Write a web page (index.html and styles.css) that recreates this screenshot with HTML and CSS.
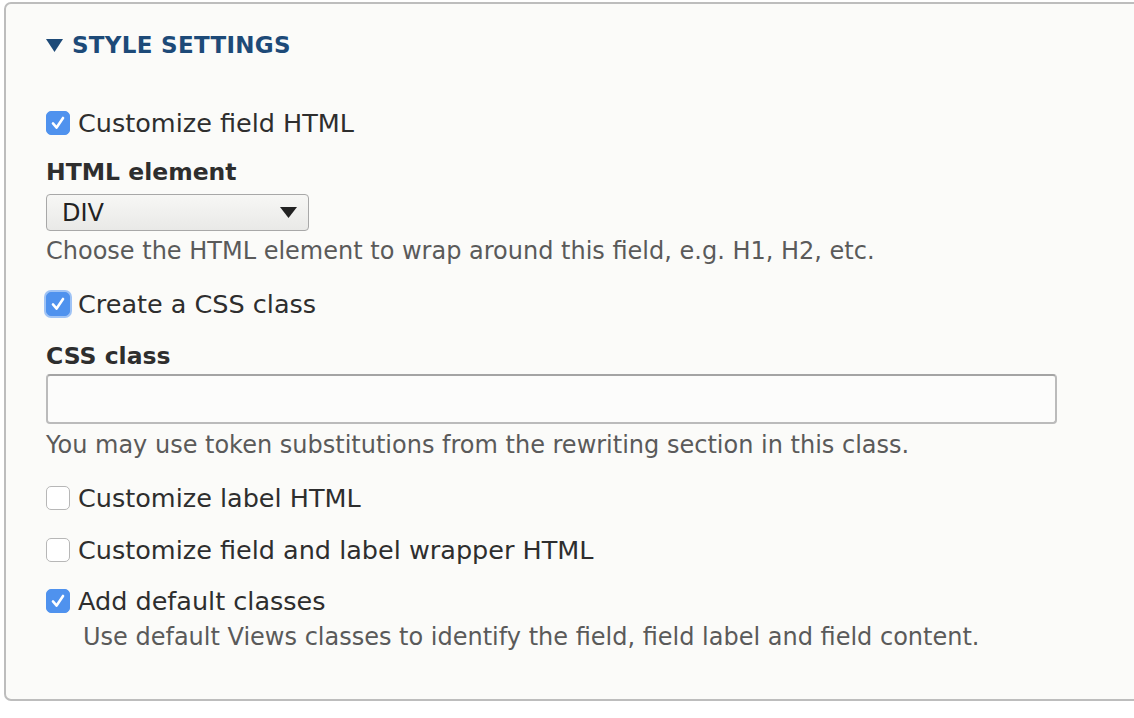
FILE: index.html
```html
<!DOCTYPE html>
<html>
<head>
<meta charset="utf-8">
<link rel="stylesheet" href="styles.css">
</head>
<body>
<div class="panel">
  <div class="legend">
    <svg class="tri" width="17" height="13" viewBox="0 0 17 13"><polygon points="0,0 17,0 8.5,13" fill="#1d4a78"/></svg>
    <span class="legend-text">STYLE SETTINGS</span>
  </div>
  <div class="body">
    <label class="check-row r1">
      <span class="cb checked"><svg viewBox="0 0 24 24" width="24" height="24"><path d="M6.5 12.5 L10.5 17 L17.5 6.5" fill="none" stroke="#fff" stroke-width="2.8" stroke-linecap="round" stroke-linejoin="round"/></svg></span>
      <span class="lbl">Customize field HTML</span>
    </label>
    <div class="field f1">
      <div class="field-label">HTML element</div>
      <div class="select"><span>DIV</span><svg width="17" height="12" viewBox="0 0 17 12"><polygon points="0,0 17,0 8.5,11" fill="#222"/></svg></div>
      <div class="desc d1">Choose the HTML element to wrap around this field, e.g. H1, H2, etc.</div>
    </div>
    <label class="check-row r2">
      <span class="cb checked focus"><svg viewBox="0 0 24 24" width="24" height="24"><path d="M6.5 12.5 L10.5 17 L17.5 6.5" fill="none" stroke="#fff" stroke-width="2.8" stroke-linecap="round" stroke-linejoin="round"/></svg></span>
      <span class="lbl">Create a CSS class</span>
    </label>
    <div class="field f2">
      <div class="field-label">CSS class</div>
      <div class="text-input"></div>
      <div class="desc d2">You may use token substitutions from the rewriting section in this class.</div>
    </div>
    <label class="check-row r3">
      <span class="cb"></span>
      <span class="lbl">Customize label HTML</span>
    </label>
    <label class="check-row r4">
      <span class="cb"></span>
      <span class="lbl">Customize field and label wrapper HTML</span>
    </label>
    <label class="check-row r5">
      <span class="cb checked"><svg viewBox="0 0 24 24" width="24" height="24"><path d="M6.5 12.5 L10.5 17 L17.5 6.5" fill="none" stroke="#fff" stroke-width="2.8" stroke-linecap="round" stroke-linejoin="round"/></svg></span>
      <span class="lbl">Add default classes</span>
    </label>
    <div class="desc indent">Use default Views classes to identify the field, field label and field content.</div>
  </div>
</div>
</body>
</html>
```
FILE: styles.css
```css
html, body {
  margin: 0;
  padding: 0;
  background: #ffffff;
  overflow: hidden;
}
body {
  font-family: "DejaVu Sans", "Liberation Sans", sans-serif;
  color: #333;
}
.panel {
  margin: 2px -20px 0 4px;
  border: 2px solid #bdbdbd;
  border-radius: 7px;
  background: #fbfbf9;
  height: 699px;
  box-sizing: border-box;
}
.legend {
  display: flex;
  align-items: center;
  padding: 27px 0 0 40px;
  height: 28px;
}
.tri {
  margin-right: 9px;
  margin-top: 1px;
}
.legend-text {
  font-size: 23px;
  font-weight: bold;
  color: #1d4a78;
  letter-spacing: 0.3px;
}
.body {
  padding: 0 0 0 40px;
}
.check-row {
  display: flex;
  align-items: center;
  height: 28px;
}
.r1 { margin-top: 50px; }
.r2 { margin-top: 25px; }
.r3 { margin-top: 25px; }
.r4 { margin-top: 24px; }
.r5 { margin-top: 23px; }
.cb {
  width: 22px;
  height: 22px;
  border: 1px solid #b7b7b7;
  border-radius: 5px;
  background: #fff;
  margin-right: 8px;
  box-sizing: content-box;
  display: flex;
  align-items: center;
  justify-content: center;
}
.cb.checked {
  background: #4f92ee;
  border-color: #4f92ee;
}
.cb.focus {
  box-shadow: 0 0 0 2px #9fc3f5;
}
.lbl {
  font-size: 25.5px;
  color: #2e2e2e;
  line-height: 28px;
}
.f1 { margin-top: 21px; }
.f2 { margin-top: 24px; }
.field-label {
  font-size: 23.5px;
  font-weight: bold;
  color: #2e2e2e;
  line-height: 28px;
}
.select {
  margin-top: 8px;
  border: 1px solid #a8a8a8;
  border-radius: 4px;
  background: linear-gradient(#f7f7f5, #e9e9e7);
  display: flex;
  align-items: center;
  justify-content: space-between;
  padding: 0 11px 0 15px;
  box-sizing: border-box;
  width: 263px;
  height: 37px;
  font-size: 24px;
  color: #222;
}
.text-input {
  margin-top: 4px;
  width: 1011px;
  height: 50px;
  box-sizing: border-box;
  border: 2px solid #bbb;
  border-top-color: #a4a4a4;
  border-radius: 4px;
  background: #fcfcfb;
}
.desc {
  font-size: 24px;
  color: #5a5a5a;
  line-height: 28px;
}
.d1 { margin-top: 6px; }
.d2 { margin-top: 7px; }
.desc.indent {
  margin-left: 37px;
  margin-top: 8px;
}
```
